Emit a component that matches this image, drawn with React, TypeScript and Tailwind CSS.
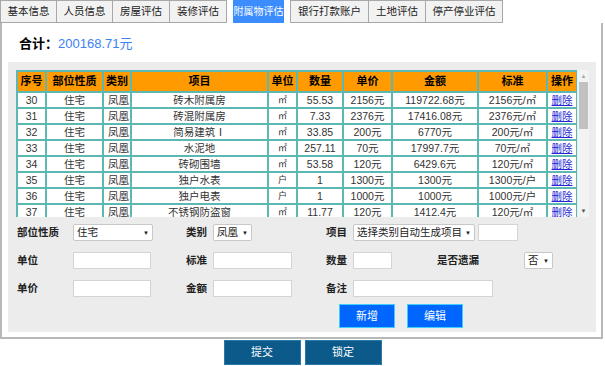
import { ReactNode } from 'react';

const tabs = ['基本信息', '人员信息', '房屋评估', '装修评估', '附属物评估', '银行打款账户', '土地评估', '停产停业评估'];

const rows = [
    ['30', '住宅', '凤凰', '砖木附属房', '㎡', '55.53', '2156元', '119722.68元', '2156元/㎡'],
    ['31', '住宅', '凤凰', '砖混附属房', '㎡', '7.33', '2376元', '17416.08元', '2376元/㎡'],
    ['32', '住宅', '凤凰', '简易建筑Ⅰ', '㎡', '33.85', '200元', '6770元', '200元/㎡'],
    ['33', '住宅', '凤凰', '水泥地', '㎡', '257.11', '70元', '17997.7元', '70元/㎡'],
    ['34', '住宅', '凤凰', '砖砌围墙', '㎡', '53.58', '120元', '6429.6元', '120元/㎡'],
    ['35', '住宅', '凤凰', '独户水表', '户', '1', '1300元', '1300元', '1300元/户'],
    ['36', '住宅', '凤凰', '独户电表', '户', '1', '1000元', '1000元', '1000元/户'],
    ['37', '住宅', '凤凰', '不锈钢防盗窗', '㎡', '11.77', '120元', '1412.4元', '120元/㎡'],
];

const headers = ['序号', '部位性质', '类别', '项目', '单位', '数量', '单价', '金额', '标准', '操作'];
const widths = [29, 57, 28, 137, 29, 46, 49, 86, 69, 30];

// tab widths in px, the active one carries white side padding
const tabWidths = ['w-[57px]', 'w-[56px]', 'w-[57px]', 'w-[57px]', 'w-[63px]', 'w-[79px]', 'w-[57px]', 'w-[77px]'];

function Label({ children, w }: { children: ReactNode; w: string }) {
    return <span className={`${w} shrink-0 font-bold text-[10.5px] text-[#222]`}>{children}</span>;
}

function Input({ w }: { w: string }) {
    return <div className={`${w} h-[17px] shrink-0 bg-white border border-[#d4d4d4]`} />;
}

function Select({ w, text }: { w: string; text: string }) {
    return (
        <div className={`${w} h-[17px] shrink-0 bg-white border border-[#c8c8c8] rounded-[2px] flex items-center justify-between pl-[3px] pr-[3px] text-[10.5px] text-[#222] leading-none`}>
            <span className="whitespace-nowrap">{text}</span>
            <span className="text-[6px] ml-[1px]">▼</span>
        </div>
    );
}

export default function App() {
    return (
        <div
            className="w-[605px] h-[366px] bg-white text-[10.5px] text-[#333] overflow-hidden"
            style={{ fontFamily: '"Liberation Sans", "Noto Sans CJK SC", sans-serif' }}
        >
            {/* Tabs */}
            <div className="flex h-[23px]">
                {tabs.map((t, i) =>
                    i === 4 ? (
                        <div key={t} className={`${tabWidths[i]} h-[23px] px-[6px] bg-white`}>
                            <div className="h-full bg-[#3b8cff] text-white text-[10px] flex items-center justify-center whitespace-nowrap">{t}</div>
                        </div>
                    ) : (
                        <div
                            key={t}
                            className={`${tabWidths[i]} h-[23px] border-y border-r border-[#a8a8a8] ${i === 0 || i === 5 ? 'border-l' : ''} bg-[#f2f2f2] flex items-center justify-center whitespace-nowrap text-[#222]`}
                        >
                            {t}
                        </div>
                    )
                )}
            </div>

            {/* Main panel */}
            <div className="w-[603px] h-[316px] border-x-2 border-b-2 border-[#b8b8b8] pl-[6px] pr-[5px]">
                <div className="h-[39px] pl-[11px] pt-[12px] text-[13px] leading-[18px]">
                    <span className="font-bold text-black">合计：</span>
                    <span className="text-[#3b82f6]">200168.71元</span>
                </div>

                <div className="w-[588px] h-[270px] bg-[#ececec] pt-[8px]">
                    {/* Table with scrollbar */}
                    <div className="flex ml-[8px] h-[147px]">
                        <div className="w-[561px] h-[147px] overflow-hidden">
                            <table className="border-collapse table-fixed w-[561px] text-[10.5px] leading-none">
                                <colgroup>
                                    {widths.map((w, i) => (
                                        <col key={i} style={{ width: w }} />
                                    ))}
                                </colgroup>
                                <thead>
                                    <tr className="h-[21px] bg-[#ff9a00]">
                                        {headers.map((h) => (
                                            <th key={h} className="border-2 border-[#5db7b2] font-bold text-black text-center p-0 whitespace-nowrap text-[11px]">
                                                {h}
                                            </th>
                                        ))}
                                    </tr>
                                </thead>
                                <tbody>
                                    {rows.map((r) => (
                                        <tr key={r[0]} className="h-[16px] bg-white">
                                            {r.map((c, i) => (
                                                <td
                                                    key={i}
                                                    className={`border-2 border-[#5db7b2] p-0 whitespace-nowrap text-[#333] ${i === 2 ? 'text-left pl-[4px]' : 'text-center'} ${i === 4 ? 'text-[9px]' : ''}`}
                                                >
                                                    {c}
                                                </td>
                                            ))}
                                            <td className="border-2 border-[#5db7b2] p-0 text-center">
                                                <span className="text-[#2323d6] underline">删除</span>
                                            </td>
                                        </tr>
                                    ))}
                                </tbody>
                            </table>
                        </div>
                        {/* Scrollbar */}
                        <div className="w-[11px] h-[147px] ml-[1px] bg-[#f3f3f3] flex flex-col items-center">
                            <span className="text-[6px] text-[#aaa] h-[12px] leading-[12px]">▲</span>
                            <div className="w-[9px] h-[47px] bg-[#c1c1c1]" />
                            <div className="flex-1" />
                            <span className="text-[6px] text-[#555] h-[12px] leading-[12px]">▼</span>
                        </div>
                    </div>

                    {/* Form */}
                    <div className="pl-[9px] mt-[7px] flex flex-col gap-[11px]">
                        <div className="flex items-center h-[17px]">
                            <Label w="w-[56px]">部位性质</Label>
                            <Select w="w-[80px]" text="住宅" />
                            <div className="w-[33px]" />
                            <Label w="w-[27px]">类别</Label>
                            <Select w="w-[39px]" text="凤凰" />
                            <div className="w-[74px]" />
                            <Label w="w-[27px]">项目</Label>
                            <Select w="w-[122px]" text="选择类别自动生成项目" />
                            <div className="w-[3px]" />
                            <Input w="w-[40px]" />
                        </div>
                        <div className="flex items-center h-[17px]">
                            <Label w="w-[56px]">单位</Label>
                            <Input w="w-[78px]" />
                            <div className="w-[35px]" />
                            <Label w="w-[27px]">标准</Label>
                            <Input w="w-[79px]" />
                            <div className="w-[34px]" />
                            <Label w="w-[27px]">数量</Label>
                            <Input w="w-[39px]" />
                            <div className="w-[45px]" />
                            <Label w="w-[87px]">是否遗漏</Label>
                            <Select w="w-[29px]" text="否" />
                        </div>
                        <div className="flex items-center h-[17px]">
                            <Label w="w-[56px]">单价</Label>
                            <Input w="w-[78px]" />
                            <div className="w-[35px]" />
                            <Label w="w-[27px]">金额</Label>
                            <Input w="w-[79px]" />
                            <div className="w-[34px]" />
                            <Label w="w-[27px]">备注</Label>
                            <Input w="w-[140px]" />
                        </div>
                    </div>

                    <div className="flex gap-[12px] ml-[331px] mt-[7px]">
                        <button className="w-[56px] h-[24px] bg-[#0066ff] border border-[#3dd0ff] text-white text-[11px]">新增</button>
                        <button className="w-[56px] h-[24px] bg-[#0066ff] border border-[#3dd0ff] text-white text-[11px]">编辑</button>
                    </div>
                </div>
            </div>

            {/* Bottom buttons */}
            <div className="flex justify-center gap-[4px] mt-[1px]">
                <button className="w-[77px] h-[25px] bg-[#0b5a8a] border border-[#2a78a8] text-white text-[11px]">提交</button>
                <button className="w-[77px] h-[25px] bg-[#0b5a8a] border border-[#2a78a8] text-white text-[11px]">锁定</button>
            </div>
        </div>
    );
}
